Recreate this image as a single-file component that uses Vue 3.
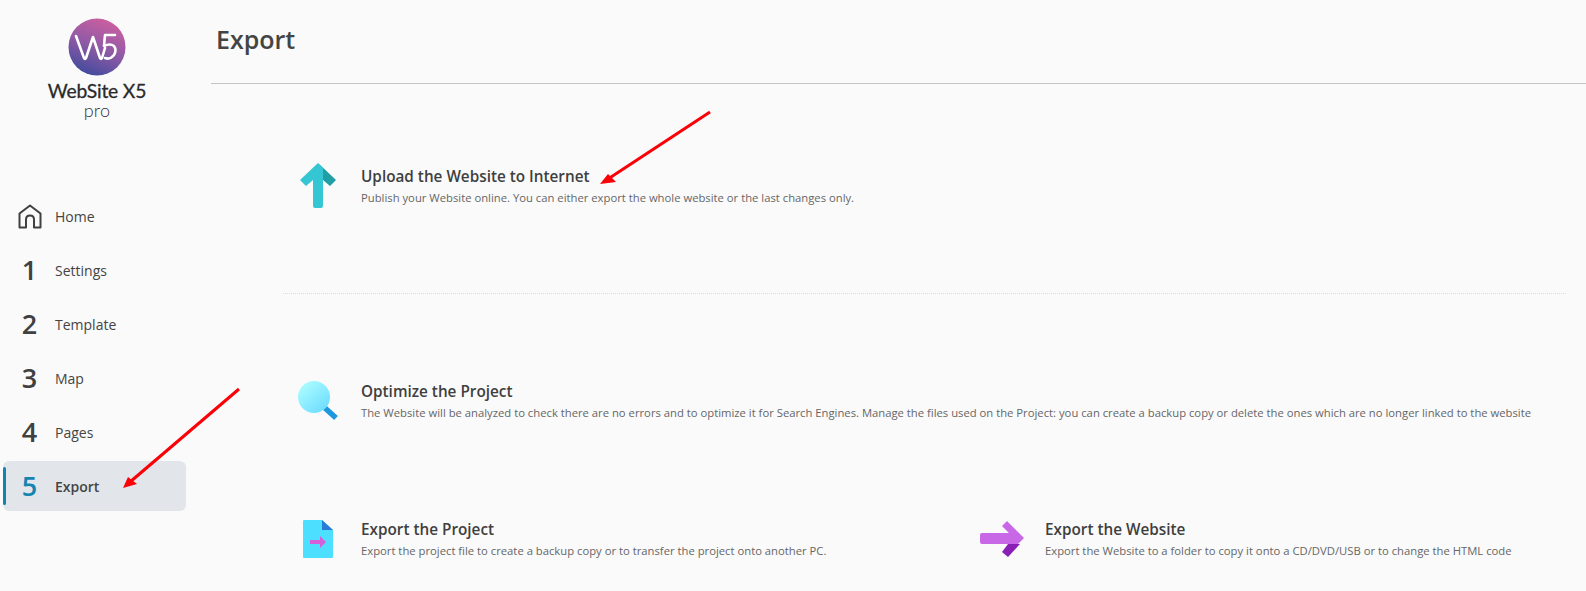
<template>
  <div class="page">
    <aside class="sidebar">
      <div class="logo">
        <svg class="logo-mark" width="58" height="58" viewBox="0 0 58 58">
          <defs>
            <linearGradient id="logoGrad" x1="0.7" y1="0" x2="0.3" y2="1">
              <stop offset="0" stop-color="#cf5f9f" />
              <stop offset="0.5" stop-color="#8f5aa6" />
              <stop offset="1" stop-color="#3f4a9c" />
            </linearGradient>
          </defs>
          <circle cx="29" cy="29" r="28.5" fill="url(#logoGrad)" />
          <path d="M8 18 L16 40 Q17 42 18 40 L25 19 L32 40 Q33 42 34 40 L37 30" fill="none" stroke="#fff" stroke-width="2.6" stroke-linecap="round" stroke-linejoin="round" />
          <path d="M47 17 H37 L36 28 Q42 25 46 28 Q49 32 46 37 Q42 42 37 40" fill="none" stroke="#fff" stroke-width="2.6" stroke-linecap="round" stroke-linejoin="round" />
        </svg>
        <div class="logo-name">WebSite X5</div>
        <div class="logo-pro">pro</div>
      </div>
      <nav class="nav">
        <div v-for="item in navItems" :key="item.label" class="nav-item" :class="{ active: item.active }">
          <span class="nav-icon">
            <svg v-if="item.home" width="24" height="25" viewBox="0 0 24 25">
              <path d="M1.5 23.5 V9.5 L12 1.5 L22.5 9.5 V23.5 H16 V15.5 Q16 11.5 12 11.5 Q8 11.5 8 15.5 V23.5 Z" fill="none" stroke="#404040" stroke-width="2" stroke-linejoin="round" />
            </svg>
            <template v-else>{{ item.num }}</template>
          </span>
          <span class="nav-label">{{ item.label }}</span>
        </div>
      </nav>
    </aside>

    <main class="main">
      <header class="header">
        <h1>Export</h1>
      </header>
      <div class="content">
        <section class="upload-row">
          <div class="entry">
            <span class="entry-icon">
              <svg width="36" height="45" viewBox="0 0 36 45">
                <path d="M23 6 L18 0 L36 17 L30 23 L23 17 Z" fill="#1f9ea6" />
                <path d="M18 0 L0 17 L6 23 L13 17 V43 Q13 45 15 45 H21 Q23 45 23 43 V5 Z" fill="#35c6d3" />
              </svg>
            </span>
            <div>
              <div class="entry-title">Upload the Website to Internet</div>
              <div class="entry-desc">Publish your Website online. You can either export the whole website or the last changes only.</div>
            </div>
          </div>
        </section>
        <section class="optimize-row">
          <div class="entry">
            <span class="entry-icon">
              <svg width="40" height="40" viewBox="0 0 40 40">
                <defs>
                  <linearGradient id="lensGrad" x1="0.2" y1="0.1" x2="0.9" y2="0.9">
                    <stop offset="0" stop-color="#a8fbff" />
                    <stop offset="1" stop-color="#6ddcff" />
                  </linearGradient>
                </defs>
                <path d="M27 27 L38 37" stroke="#1d97dd" stroke-width="5.5" />
                <circle cx="16" cy="16" r="16" fill="url(#lensGrad)" />
              </svg>
            </span>
            <div>
              <div class="entry-title">Optimize the Project</div>
              <div class="entry-desc">The Website will be analyzed to check there are no errors and to optimize it for Search Engines. Manage the files used on the Project: you can create a backup copy or delete the ones which are no longer linked to the website</div>
            </div>
          </div>
        </section>
        <section class="export-row">
          <div class="entry">
            <span class="entry-icon">
              <svg width="30" height="38" viewBox="0 0 30 38">
                <path d="M1 0 H19 L30 10 V37 Q30 38 29 38 H1 Q0 38 0 37 V1 Q0 0 1 0 Z" fill="#4ddfff" />
                <path d="M19 0 L30 10 H19 Z" fill="#2a7bd8" />
                <path d="M7 20 H17 V16 L23 22 L17 28 V24 H7 Z" fill="#d45fd8" />
              </svg>
            </span>
            <div>
              <div class="entry-title">Export the Project</div>
              <div class="entry-desc">Export the project file to create a backup copy or to transfer the project onto another PC.</div>
            </div>
          </div>
          <div class="entry">
            <span class="entry-icon">
              <svg width="44" height="36" viewBox="0 0 44 36">
                <path d="M22 31 L28 36 L40 23 H28 Z" fill="#8a1fb5" />
                <path d="M2 12 H29 L22 5 L27 0 L44 17 L38 23 H2 Q0 23 0 21 V14 Q0 12 2 12 Z" fill="#c868e6" />
              </svg>
            </span>
            <div>
              <div class="entry-title">Export the Website</div>
              <div class="entry-desc">Export the Website to a folder to copy it onto a CD/DVD/USB or to change the HTML code</div>
            </div>
          </div>
        </section>
        <div class="divider"></div>
      </div>
    </main>

    <svg class="arrows" width="1586" height="591" viewBox="0 0 1586 591">
      <g fill="#fb0007" stroke="#fb0007" stroke-width="3">
        <path d="M710 112 L608 179" fill="none" />
        <path d="M600 184 L608 174 L616 182 Z" stroke="none" />
        <path d="M239 389 L130 482" fill="none" />
        <path d="M123 488 L128 477 L137 484 Z" stroke="none" />
      </g>
    </svg>
  </div>
</template>

<script setup>
const navItems = [
  { label: 'Home', home: true },
  { label: 'Settings', num: 1 },
  { label: 'Template', num: 2 },
  { label: 'Map', num: 3 },
  { label: 'Pages', num: 4 },
  { label: 'Export', num: 5, active: true }
];
</script>

<style>
html,
body {
  margin: 0;
  background: #fafafa;
}
</style>

<style scoped>
.page {
  position: relative;
  display: flex;
  width: 1586px;
  height: 591px;
  overflow: hidden;
  background: #fafafa;
  color: #3f3f3f;
  font-family: "Open Sans", "Noto Sans", sans-serif;
}

.sidebar {
  width: 211px;
  flex-shrink: 0;
  padding-top: 18px;
  box-sizing: border-box;
}

.logo {
  display: flex;
  flex-direction: column;
  align-items: center;
  width: 194px;
  height: 111px;
}

.logo-mark {
  display: block;
  flex-shrink: 0;
}

.logo-name {
  margin-top: 5px;
  font-family: Lato, sans-serif;
  font-size: 19.3px;
  line-height: 20px;
  letter-spacing: -0.2px;
  color: #2a2a2a;
  -webkit-text-stroke: 0.3px #2a2a2a;
}

.logo-pro {
  font-family: Lato, sans-serif;
  font-size: 18px;
  line-height: 18px;
  letter-spacing: 0.3px;
  font-weight: 300;
  color: #333;
}

.nav {
  display: flex;
  flex-direction: column;
  gap: 4px;
  margin-top: 62px;
  padding-left: 3px;
}

.nav-item {
  display: flex;
  align-items: center;
  width: 183px;
  height: 50px;
  box-sizing: border-box;
  padding-left: 14px;
  border-radius: 6px;
  position: relative;
}

.nav-item.active {
  background: #e2e6ea;
}

.nav-item.active::before {
  content: "";
  position: absolute;
  left: 0;
  top: 6px;
  width: 3px;
  height: 38px;
  border-radius: 2px;
  background: #0f85ad;
}

.nav-icon {
  width: 25px;
  display: flex;
  justify-content: center;
  font-size: 27px;
  font-weight: 600;
  line-height: 30px;
  color: #404040;
}

.active .nav-icon {
  color: #1585b0;
}

.nav-label {
  margin-left: 13px;
  font-size: 14px;
  color: #444;
}

.active .nav-label {
  font-weight: 600;
}

.main {
  flex: 1;
  min-width: 0;
}

.header {
  height: 84px;
  box-sizing: border-box;
  border-bottom: 1px solid #c4c4c4;
  padding: 19px 0 0 5px;
}

.header h1 {
  margin: 0;
  font-size: 25px;
  line-height: 40px;
  font-weight: 600;
  color: #444;
}

.content {
  position: relative;
  padding-left: 72px;
}

.upload-row {
  height: 209px;
  padding-top: 79px;
  box-sizing: border-box;
}

.optimize-row {
  height: 138px;
  padding-top: 87px;
  box-sizing: border-box;
}

.export-row {
  display: flex;
  padding-top: 87px;
}

.export-row .entry {
  width: 684px;
  flex-shrink: 0;
}

.divider {
  position: absolute;
  left: 72px;
  right: 20px;
  top: 209px;
  border-top: 1px dotted #dcdcdc;
}

.entry {
  display: flex;
  align-items: center;
}

.entry-icon {
  width: 78px;
  display: flex;
  justify-content: center;
  padding-right: 8px;
  box-sizing: border-box;
  flex-shrink: 0;
}

.entry-title {
  font-size: 15.3px;
  line-height: 22px;
  font-weight: 600;
  color: #3f3f3f;
}

.entry-desc {
  margin-top: 3px;
  font-size: 11.27px;
  line-height: 16px;
  color: #666;
  white-space: nowrap;
}

.arrows {
  position: absolute;
  left: 0;
  top: 0;
  pointer-events: none;
}
</style>
